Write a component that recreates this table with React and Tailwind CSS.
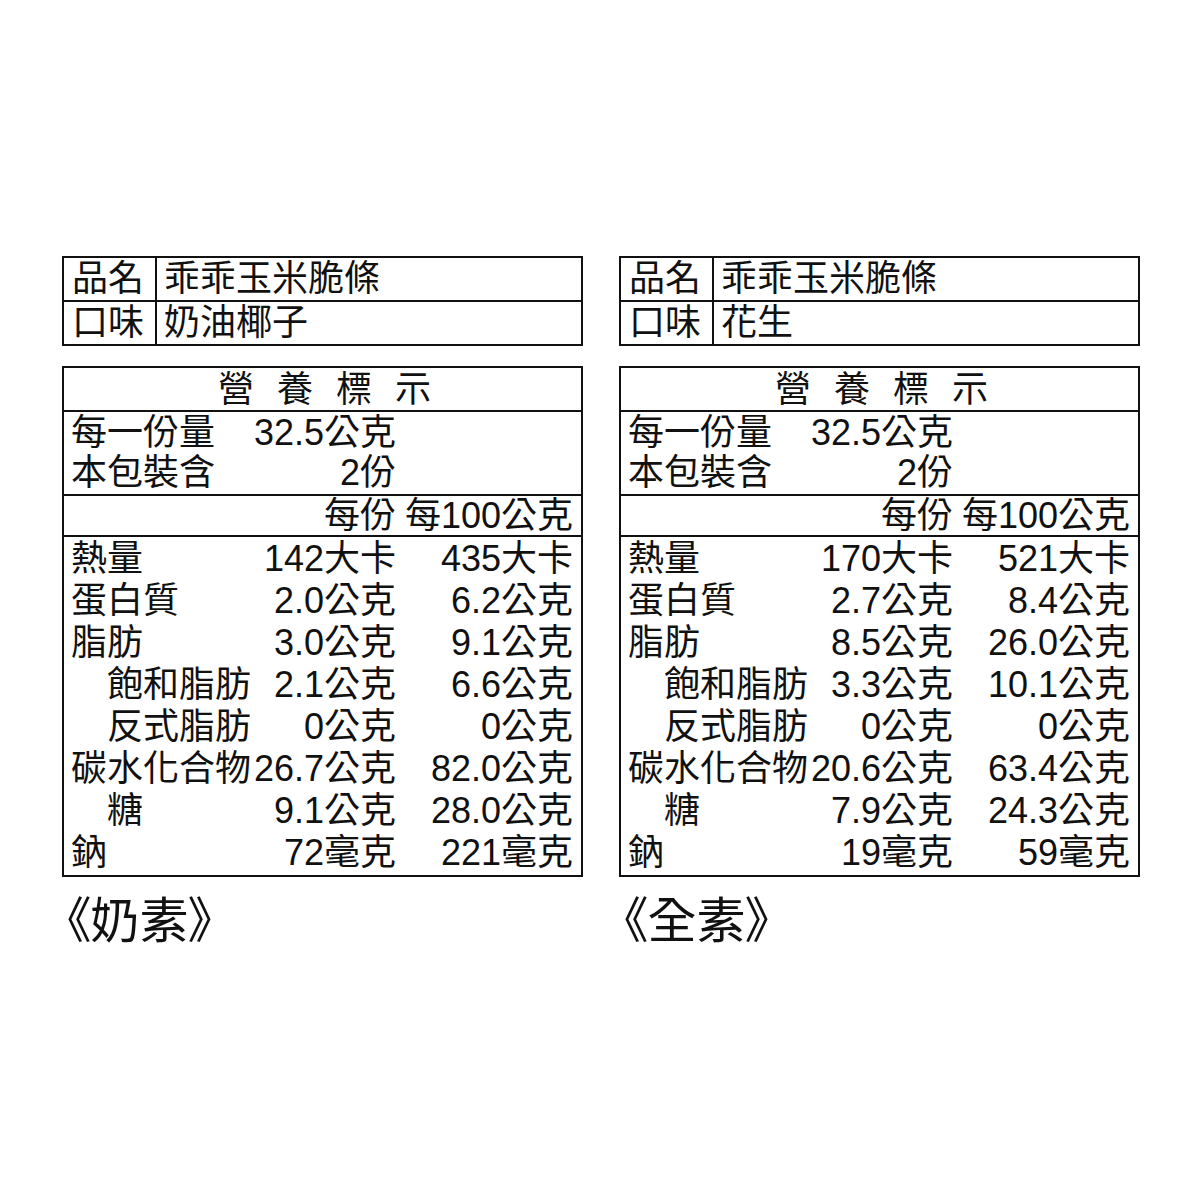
const products = [
  {
    name: '乖乖玉米脆條',
    flavor: '奶油椰子',
    tag: '《奶素》',
    serving: '32.5公克',
    count: '2份',
    rows: [
      { label: '熱量', a: '142大卡', b: '435大卡' },
      { label: '蛋白質', a: '2.0公克', b: '6.2公克' },
      { label: '脂肪', a: '3.0公克', b: '9.1公克' },
      { label: '飽和脂肪', a: '2.1公克', b: '6.6公克', indent: true },
      { label: '反式脂肪', a: '0公克', b: '0公克', indent: true },
      { label: '碳水化合物', a: '26.7公克', b: '82.0公克' },
      { label: '糖', a: '9.1公克', b: '28.0公克', indent: true },
      { label: '鈉', a: '72毫克', b: '221毫克' },
    ],
  },
  {
    name: '乖乖玉米脆條',
    flavor: '花生',
    tag: '《全素》',
    serving: '32.5公克',
    count: '2份',
    rows: [
      { label: '熱量', a: '170大卡', b: '521大卡' },
      { label: '蛋白質', a: '2.7公克', b: '8.4公克' },
      { label: '脂肪', a: '8.5公克', b: '26.0公克' },
      { label: '飽和脂肪', a: '3.3公克', b: '10.1公克', indent: true },
      { label: '反式脂肪', a: '0公克', b: '0公克', indent: true },
      { label: '碳水化合物', a: '20.6公克', b: '63.4公克' },
      { label: '糖', a: '7.9公克', b: '24.3公克', indent: true },
      { label: '鈉', a: '19毫克', b: '59毫克' },
    ],
  },
];

// one line of the nutrition table: label + two right-aligned value columns
const Line = ({ label, a, b, indent, h = 'leading-[42px]' }) => (
  <div className={`flex pr-[8px] whitespace-nowrap ${h}`}>
    <div className={`flex-1 min-w-0 pl-[7px] ${indent ? 'indent-[36px]' : ''}`}>{label}</div>
    <div className="w-[145px] text-right">{a}</div>
    <div className="w-[177px] text-right">{b}</div>
  </div>
);

const Panel = ({ p }) => (
  <div className="w-[521px] flex flex-col">
    <div className="border-2 border-[#111]">
      <div className="flex h-[44px] leading-[42px] border-b-2 border-[#111]">
        <div className="w-[93px] pl-[8px] border-r-2 border-[#111]">品名</div>
        <div className="flex-1 pl-[7px]">{p.name}</div>
      </div>
      <div className="flex h-[42px] leading-[42px]">
        <div className="w-[93px] pl-[8px] border-r-2 border-[#111]">口味</div>
        <div className="flex-1 pl-[7px]">{p.flavor}</div>
      </div>
    </div>

    <div className="mt-[20px] border-2 border-[#111]">
      <div className="h-[44px] leading-[42px] pt-[1px] border-b-2 border-[#111] flex justify-center gap-[23px] pl-[4px]">
        <span>營</span>
        <span>養</span>
        <span>標</span>
        <span>示</span>
      </div>
      <div className="h-[84px] pt-[1px] border-b-2 border-[#111]">
        <Line label="每一份量" a={p.serving} h="leading-[40px]" />
        <Line label="本包裝含" a={p.count} h="leading-[40px]" />
      </div>
      <div className="h-[41px] border-b-2 border-[#111]">
        <Line label="" a="每份" b="每100公克" h="leading-[40px]" />
      </div>
      <div className="h-[338px] pt-[1px]">
        {p.rows.map((r) => (
          <Line key={r.label} {...r} />
        ))}
      </div>
    </div>

    <div className="mt-[16px] pl-[4px] text-[49px] leading-[56px] [font-feature-settings:'palt']">{p.tag}</div>
  </div>
);

export default function App() {
  return (
    <div className="w-[1200px] h-[1200px] bg-white text-[#111] text-[36px] font-[family-name:'Liberation_Sans','Noto_Sans_CJK_TC',sans-serif] pt-[256px] pl-[62px] flex gap-[36px]">
      {products.map((p) => (
        <Panel key={p.flavor} p={p} />
      ))}
    </div>
  );
}
